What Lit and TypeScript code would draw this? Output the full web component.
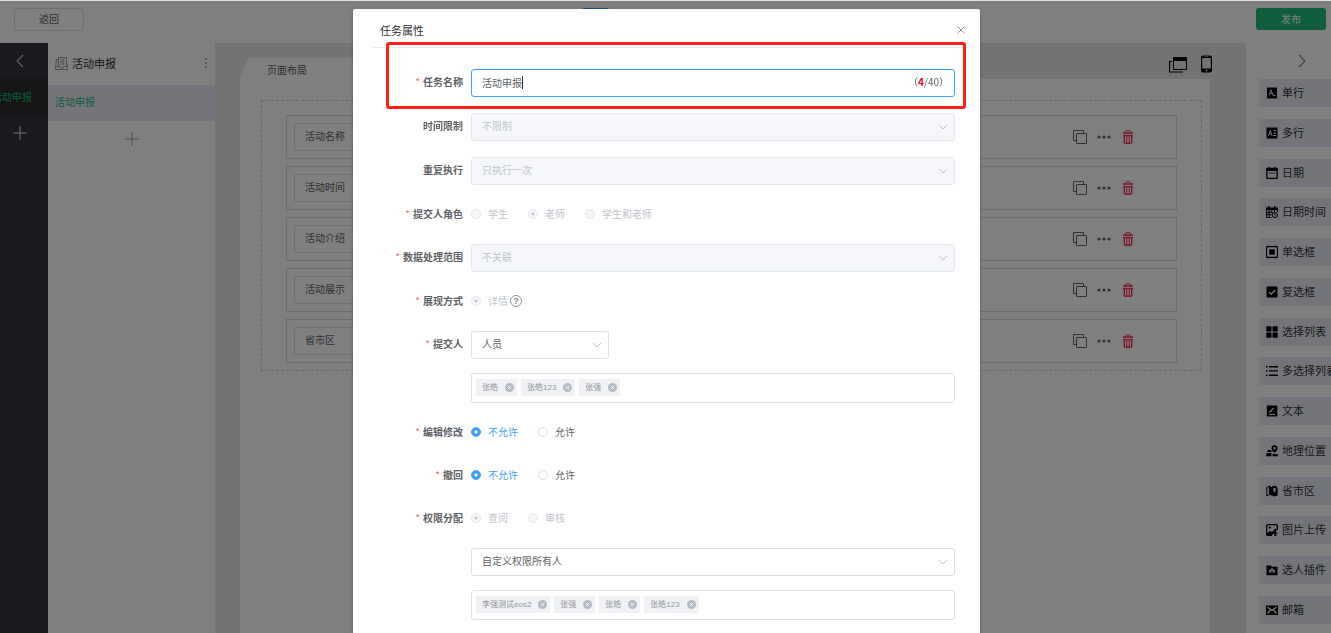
import { LitElement, html, css, svg, nothing, TemplateResult, SVGTemplateResult } from "lit";
import { customElement, state, query } from "lit/decorators.js";
import { classMap } from "lit/directives/class-map.js";
import { styleMap } from "lit/directives/style-map.js";

interface Tool {
  name: string;
  icon: SVGTemplateResult;
}

interface Choice {
  text: string;
  checked?: boolean;
}

const tools: Tool[] = [
  {
    name: "单行",
    icon: svg`<path fill-rule="evenodd" d="M1 .5h10v11H1zM4.600 2.500 2.500 8.500h1l.5-1.400h2l.5 1.400h1L5.400 2.500zM5 4l.7 2.200H4.300zM7.500 8h2v.9h-2z"/>`,
  },
  {
    name: "多行",
    icon: svg`<path fill-rule="evenodd" d="M.5.5h11v11H.5zM4 3 2 9h1l.4-1.400h1.900L5.700 9h1L4.800 3zM4.400 4.400 5 6.600H3.700zM7.500 3H10v.9H7.500zM7.500 5.500H10v.9H7.500zM7.500 8H10v.9H7.500z"/>`,
  },
  {
    name: "日期",
    icon: svg`<path fill-rule="evenodd" d="M1 .8h1.500V0H4v.8h4V0h1.500v.8H11q.8 0 .8.8V11q0 1-1 1H1.200q-1 0-1-1V1.600q0-.8.8-.8zM1.500 4v6.700h9V4zM3 5.500h1.300v1.200H3zM5.400 5.500h1.300v1.200H5.400zM7.800 5.500h1.300v1.200H7.800z"/>`,
  },
  {
    name: "日期时间",
    icon: svg`<path d="M0 1.500h2V0h1.500v1.500H8V0h1.500v1.500H12V4H0z"/><path d="M.5 4v7.500h5M11.500 4v2M.5 6.300h6M.5 8.700h5M3.200 4v7M5.800 4v3M8.500 4v2" fill="none" stroke="currentColor"/><circle cx="8.800" cy="9" r="2.600" fill="none" stroke="currentColor"/><path d="M8.800 7.400V9h1.500" fill="none" stroke="currentColor" stroke-width=".8"/>`,
  },
  {
    name: "单选框",
    icon: svg`<rect x=".6" y=".6" width="10.800" height="10.800" rx=".5" fill="none" stroke="currentColor" stroke-width="1.100"/><path d="M3.300 3.300h5.400v5.400H3.300z"/>`,
  },
  {
    name: "复选框",
    icon: svg`<rect x=".5" y=".5" width="11" height="11" rx="1"/><path class="cut" d="m3 6 2.200 2.200L9.200 4"/>`,
  },
  {
    name: "选择列表",
    icon: svg`<rect x=".3" y=".3" width="5.200" height="5.200" rx=".8"/><rect x="6.500" y=".3" width="5.200" height="5.200" rx=".8"/><rect x=".3" y="6.500" width="5.200" height="5.200" rx=".8"/><rect x="6.500" y="6.500" width="5.200" height="5.200" rx=".8"/>`,
  },
  {
    name: "多选择列表",
    icon: svg`<path d="M0 1h1.500v1.500H0zM0 5.200h1.500v1.500H0zM0 9.500h1.500V11H0zM3 1h9v1.400H3zM3 5.200h9v1.400H3zM3 9.500h9v1.400H3z"/>`,
  },
  {
    name: "文本",
    icon: svg`<rect x=".8" y=".5" width="10.500" height="11" rx=".8"/><path class="cut" d="m3.500 7.300 4.500-4.500M3 9.500h6"/>`,
  },
  {
    name: "地理位置",
    icon: svg`<path fill-rule="evenodd" d="M8.500.3a3 3 0 0 1 3 3C11.500 5.500 8.500 8 8.500 8s-3-2.500-3-4.700a3 3 0 0 1 3-3zm0 1.700a1.300 1.300 0 1 0 0 2.600 1.300 1.300 0 0 0 0-2.600z"/><path d="M1.800 5h3l1 2H1.200zM.8 8h4.600v3.300H0zM6.500 9h5l.5 2.300H6.500z"/>`,
  },
  {
    name: "省市区",
    icon: svg`<path d="M.8 2.500 3.500 1v8.500L.8 11z" fill="none" stroke="currentColor"/><path d="M3.500 1 6 2.200v8.500L3.500 9.500z"/><path fill-rule="evenodd" d="M8.500.8a3.200 3.200 0 0 1 3 3.200v6.500L8 11.500 5.500 10V4a3.200 3.200 0 0 1 3-3.200zm0 2a1.400 1.400 0 0 0-1.400 1.500c0 1.500 1.400 3.200 1.400 3.200s1.400-1.700 1.400-3.200a1.400 1.400 0 0 0-1.400-1.500z"/>`,
  },
  {
    name: "图片上传",
    icon: svg`<path d="M11.300 6V1.500q0-.8-.8-.8H1.500q-.8 0-.8.8v9q0 .8.8.8H6" fill="none" stroke="currentColor" stroke-width="1.300"/><circle cx="3.800" cy="3.600" r="1.100"/><path d="m1 9.500 3-2.800 2 1.300 3.500-3.500L11 6 6 11.300H1zM9.300 7 12 9.500h-1.700V12H8.400V9.500H6.800z"/>`,
  },
  {
    name: "选人插件",
    icon: svg`<path fill-rule="evenodd" d="M.5 1.500h4.300L6 2.700h5.500v8.500H.5zM6 4.200a1.200 1.200 0 0 0-1.200 1.300l-1.800.5v3h6V6l-1.800-.5A1.200 1.200 0 0 0 6 4.200z"/><path d="M5.500 6.500h1V9h-1zM3.800 7.500h.8V9h-.8zM7.400 7.500h.8V9h-.8z"/>`,
  },
  {
    name: "邮箱",
    icon: svg`<path d="M0 1.500h12v9.500H0z"/><path class="cut" d="m1.500 3.300 4.500 3 4.500-3M1.500 9.500 4.500 6M10.500 9.500 7.500 6"/>`,
  },
];

const fields = ["活动名称", "活动时间", "活动介绍", "活动展示", "省市区"];

const chevron = html`<svg class="chevron" viewBox="0 0 10 10" aria-hidden="true"><path d="m1 3 4 4 4-4" /></svg>`;
const plus = html`<svg class="plus" viewBox="0 0 14 14" aria-hidden="true"><path d="M0 7h14M7 0v14" /></svg>`;

@customElement("app-root")
export class AppRoot extends LitElement {
  static styles = css`
    :host {
      display: block;
      height: 100vh;
      overflow: hidden;
      position: relative;
      font: 10px/16px "Noto Sans CJK SC", "Noto Sans", sans-serif;
      color: #606266;
      --line: #dcdfe6;
      --tint: #e7eaf4;
      --green: #1fba78;
      --blue: #409eff;
    }
    *,
    *::before {
      box-sizing: border-box;
    }
    button,
    input,
    select {
      font: inherit;
      color: inherit;
      margin: 0;
    }
    button {
      border: 0;
      padding: 0;
      background: none;
    }
    svg {
      display: block;
      flex: none;
    }
    .app {
      height: 100%;
      display: flex;
      flex-direction: column;
      background: #fff;
    }
    .bar {
      display: flex;
      justify-content: space-between;
      align-items: flex-start;
      height: 43px;
      padding: 7px 5px 0 14px;
      border-top: 1px solid #fff;
    }
    .bar button {
      width: 70px;
      height: 22px;
      padding-bottom: 1px;
      border-radius: 3px;
    }
    .bar .back {
      height: 23px;
      border: 1px solid var(--line);
    }
    .bar .publish {
      background: var(--green);
      color: #fff;
    }
    .bar .mode {
      width: 27px;
      margin-right: 150px;
      background: var(--blue);
      border-radius: 2px;
    }
    .work {
      flex: 1;
      min-height: 0;
      display: flex;
    }
    .rail {
      width: 48px;
      background: #34333c;
      color: #c4c4c4;
      display: flex;
      flex-direction: column;
      overflow: hidden;
    }
    .rail button,
    .steps button {
      height: 36px;
      display: grid;
      place-items: center;
    }
    .rail button {
      padding-right: 8px;
    }
    .rail .add {
      color: #e8e8e8;
    }
    .rail .active {
      background: #2b2b2d;
      color: var(--green);
      justify-content: start;
    }
    .rail .active span {
      margin-left: -8px;
      white-space: nowrap;
    }
    .plus {
      width: 14px;
      height: 14px;
      stroke: currentColor;
      fill: none;
    }
    .steps {
      width: 167px;
      display: flex;
      flex-direction: column;
      color: #9a9a9e;
    }
    .steps header {
      height: 42px;
      padding: 0 7px 2px;
      display: flex;
      align-items: center;
      gap: 4px;
    }
    .steps h2 {
      flex: 1;
      margin: 0;
      font-size: 11px;
      font-weight: 400;
      color: #303133;
    }
    .steps .active {
      background: var(--tint);
      color: var(--green);
      justify-content: start;
      padding: 0 0 2px 7px;
    }
    .canvas {
      flex: 1;
      min-width: 0;
      background: #e6e6e6;
      padding: 15px 36px 0 25px;
      display: flex;
      flex-direction: column;
    }
    .tabs {
      height: 21px;
      display: flex;
      justify-content: space-between;
      align-items: center;
    }
    .tab {
      width: 160px;
      height: 21px;
      padding: 4px 27px 0;
      background: #fff;
      clip-path: polygon(8px 0, 100% 0, 100% 100%, 0 100%);
    }
    .devices {
      height: 31px;
      padding-bottom: 10px;
      display: flex;
      align-items: center;
      gap: 14px;
      color: #000;
    }
    .devices svg {
      width: 18px;
      height: 18px;
    }
    .devices .phone {
      width: 11px;
      margin-right: -2px;
    }
    .sheet {
      flex: 1;
      background: #fff;
      padding: 21px 8px 0 21px;
    }
    .drop {
      border: 1px dashed #d2d2d4;
      padding: 14px 24px 7px;
      display: grid;
      gap: 7px;
    }
    .card {
      height: 44px;
      border: 1px solid #d9d9db;
      padding: 0 41px 0 7px;
      display: flex;
      align-items: center;
      gap: 10px;
    }
    .card .name {
      width: 60%;
      height: 28px;
      margin-right: auto;
      border: 1px solid var(--line);
      border-radius: 2px;
      padding: 4px 10px;
    }
    .card svg {
      width: 14px;
      height: 14px;
    }
    .card .trash {
      color: #f5365c;
    }
    .tools {
      width: 85px;
      display: flex;
      flex-direction: column;
      padding: 0 0 9px 13px;
      overflow: hidden;
      color: #303133;
      font-size: 11px;
    }
    .fold {
      height: 36px;
      padding-left: 14px;
      display: grid;
      place-items: center;
      color: #808080;
    }
    .angle {
      width: 8px;
      height: 14px;
      stroke: currentColor;
      fill: none;
      stroke-width: 1.200;
    }
    .palette {
      flex: 1;
      display: flex;
      flex-direction: column;
      justify-content: space-between;
    }
    .palette button {
      height: 28px;
      width: 90px;
      padding-left: 7px;
      display: flex;
      align-items: center;
      gap: 4px;
      background: var(--tint);
      white-space: nowrap;
    }
    .palette svg {
      width: 12px;
      height: 12px;
      color: #000;
      fill: currentColor;
    }
    .palette span {
      padding-bottom: 2px;
    }
    .cut {
      fill: none;
      stroke: #fff;
      stroke-width: 1.200;
    }
    .mask {
      position: absolute;
      inset: 1px 0 0;
      background: rgba(0, 0, 0, 0.5);
      display: flex;
      justify-content: center;
      align-items: flex-start;
      padding: 8px 0 0 2px;
    }
    .top-edge {
      position: absolute;
      inset: 0 0 auto;
      height: 1px;
      background: #dfe1e0;
    }
    .dialog {
      width: 627px;
      max-width: 96%;
      background: #fff;
      border-radius: 2px;
      box-shadow: 0 1px 3px rgba(0, 0, 0, 0.3);
      padding-bottom: 40px;
    }
    .dialog > header {
      height: 39px;
      margin: 0 11px 0 20px;
      padding: 4px 3px 0 7px;
      display: flex;
      align-items: center;
      justify-content: space-between;
      border-bottom: 1px solid #e8e8ea;
    }
    .dialog h1 {
      margin: 0;
      font-size: 11px;
      font-weight: 400;
      color: #303133;
    }
    .close svg {
      width: 10px;
      height: 10px;
      stroke: #909399;
      fill: none;
    }
    form {
      padding: 21px 25px 0 0;
      display: grid;
      gap: 16px;
    }
    .row {
      position: relative;
      display: grid;
      grid-template-columns: 110px 1fr;
      column-gap: 8px;
    }
    .title {
      text-align: right;
      font-weight: 700;
      line-height: 25px;
    }
    .required::before {
      content: "*";
      color: #f56c6c;
      font-weight: 400;
      margin-right: 3px;
    }
    .stack {
      display: grid;
      gap: 14px;
    }
    .box {
      position: relative;
      height: 28px;
    }
    .short {
      width: 138px;
    }
    .box input,
    .box select {
      width: 100%;
      height: 100%;
      border: 1px solid var(--line);
      border-radius: 3px;
      padding: 0 10px 2px;
      background: #fff;
      outline: none;
      appearance: none;
    }
    .box input {
      border-color: var(--blue);
      caret-color: transparent;
    }
    .box select:disabled {
      background: #f5f7fa;
      border-color: #e4e7ed;
      color: #c0c4cc;
      opacity: 1;
    }
    .box .chevron {
      position: absolute;
      right: 7px;
      top: 9px;
      width: 10px;
      height: 10px;
      stroke: #c0c4cc;
      fill: none;
      pointer-events: none;
    }
    .caret {
      position: absolute;
      top: 7px;
      width: 1px;
      height: 13px;
      background: #303133;
      pointer-events: none;
    }
    .count {
      position: absolute;
      right: 6px;
      top: 5px;
      pointer-events: none;
    }
    .count b {
      color: #f00018;
    }
    .mark {
      position: absolute;
      inset: -27px -11px -12px 33px;
      border: 3px solid #ff2015;
      border-radius: 3px;
      pointer-events: none;
    }
    .radios {
      height: 27px;
      padding-bottom: 2px;
      display: flex;
      align-items: center;
      gap: 20px;
    }
    .radios label {
      display: flex;
      align-items: center;
      gap: 7px;
    }
    .radios input {
      appearance: none;
      width: 10px;
      height: 10px;
      border: 1px solid var(--line);
      border-radius: 50%;
      background: #fff;
    }
    .radios input:checked {
      border-color: var(--blue);
      background: radial-gradient(circle, #fff 1px, var(--blue) 2px);
    }
    .on {
      color: var(--blue);
    }
    .off {
      color: #c0c4cc;
    }
    .off input {
      border-color: #e4e7ed;
      background: #f5f7fa;
    }
    .off input:checked {
      border-color: #e4e7ed;
      background: radial-gradient(circle, #c0c4cc 1px, #f5f7fa 2px);
    }
    .help {
      width: 12px;
      height: 12px;
      margin-left: -18px;
      border: 1px solid #909399;
      border-radius: 50%;
      color: #808080;
      font: 700 9px/10px "Liberation Sans", sans-serif;
      text-align: center;
    }
    .tags {
      height: 30px;
      border: 1px solid var(--line);
      border-radius: 3px;
      padding: 0 4px 2px;
      display: flex;
      align-items: center;
      gap: 4px;
      overflow: hidden;
    }
    .tag {
      height: 17px;
      padding: 0 3px 0 6px;
      display: flex;
      align-items: center;
      gap: 7px;
      background: #f0f2f5;
      color: #909399;
      font: 8px/17px "Liberation Sans", "Noto Sans CJK SC", sans-serif;
    }
    .tag svg {
      width: 9px;
      height: 9px;
    }
  `;

  @state() private taskName = "活动申报";
  @query("#task") private taskInput!: HTMLInputElement;

  protected firstUpdated() {
    this.taskInput.focus();
    this.taskInput.setSelectionRange(this.taskName.length, this.taskName.length);
  }

  private radios(id: string, title: string, choices: Choice[], disabled = false, extra: unknown = nothing) {
    return html`<div class="row">
      <span class="title required" id=${id}>${title}</span>
      <div class="radios" role="radiogroup" aria-labelledby=${id}>
        ${choices.map(
          (c) => html`<label class=${classMap({ on: !!c.checked && !disabled, off: disabled })}
            ><input type="radio" name=${id} ?checked=${c.checked} ?disabled=${disabled} />${c.text}</label
          >`
        )}
        ${extra}
      </div>
    </div>`;
  }

  private select(id: string, value: string, disabled = false, short = false, label: unknown = nothing) {
    return html`<div class=${classMap({ box: true, short })}>
      <select id=${id} ?disabled=${disabled} aria-label=${label}>
        <option>${value}</option>
      </select>
      ${chevron}
    </div>`;
  }

  private selectRow(id: string, title: string, value: string, required = false) {
    return html`<div class="row">
      <label class=${classMap({ title: true, required })} for=${id}>${title}</label>
      ${this.select(id, value, true)}
    </div>`;
  }

  private tags(names: string[]): TemplateResult {
    return html`<div class="tags">
      ${names.map(
        (n) => html`<span class="tag"
          >${n}<button type="button" aria-label="移除">
            <svg viewBox="0 0 10 10">
              <circle cx="5" cy="5" r="5" fill="#b4bac4" />
              <path d="m3.200 3.200 3.600 3.600M6.800 3.200 3.200 6.800" stroke="#fff" />
            </svg></button
        ></span>`
      )}
    </div>`;
  }

  private renderDialog() {
    return html`<section class="dialog" role="dialog" aria-labelledby="heading">
      <header>
        <h1 id="heading">任务属性</h1>
        <button class="close" aria-label="关闭">
          <svg viewBox="0 0 10 10"><path d="m1.500 1.500 7 7M8.500 1.500l-7 7" /></svg>
        </button>
      </header>
      <form>
        <div class="row">
          <label class="title required" for="task">任务名称</label>
          <div class="box">
            <input
              id="task"
              type="text"
              maxlength="40"
              .value=${this.taskName}
              @input=${(e: Event) => (this.taskName = (e.target as HTMLInputElement).value)}
            />
            <span class="caret" style=${styleMap({ left: `${11 + this.taskName.length * 10}px` })}></span>
            <span class="count">（<b>${this.taskName.length}</b>/40）</span>
          </div>
          <div class="mark"></div>
        </div>
        ${this.selectRow("limit", "时间限制", "不限制")} ${this.selectRow("repeat", "重复执行", "只执行一次")}
        ${this.radios("role", "提交人角色", [{ text: "学生" }, { text: "老师", checked: true }, { text: "学生和老师" }], true)}
        ${this.selectRow("scope", "数据处理范围", "不关联", true)}
        ${this.radios("display", "展现方式", [{ text: "详情", checked: true }], true, html`<span class="help">?</span>`)}
        <div class="row">
          <label class="title required" for="submitter">提交人</label>
          <div class="stack">
            ${this.select("submitter", "人员", false, true)} ${this.tags(["张皓", "张皓123", "张强"])}
          </div>
        </div>
        ${this.radios("edit", "编辑修改", [{ text: "不允许", checked: true }, { text: "允许" }])}
        ${this.radios("recall", "撤回", [{ text: "不允许", checked: true }, { text: "允许" }])}
        ${this.radios("rights", "权限分配", [{ text: "查阅", checked: true }, { text: "审核" }], true)}
        <div class="row">
          <span></span>
          <div class="stack">
            ${this.select("owner", "自定义权限所有人", false, false, "权限分配")}
            ${this.tags(["李强测试eos2", "张强", "张皓", "张皓123"])}
          </div>
        </div>
      </form>
    </section>`;
  }

  render() {
    return html`
      <div class="app">
        <header class="bar">
          <button class="back">返回</button>
          <button class="mode" aria-label="模式"></button>
          <button class="publish">发布</button>
        </header>
        <div class="work">
          <nav class="rail">
            <button aria-label="收起"><svg class="angle" viewBox="0 0 8 14"><path d="M7 1 1 7l6 6" /></svg></button>
            <button class="active"><span>活动申报</span></button>
            <button class="add" aria-label="添加">${plus}</button>
          </nav>
          <aside class="steps">
            <header>
              <svg width="13" height="13" viewBox="0 0 13 13" fill="none" stroke="currentColor">
                <path d="M3.500 9.500v-9h8v9M5.500 3h4M5.500 5h4M5.500 7h4M3.500 2.500h-2l-1 7v3h12v-3h-4l-.5 1.500H5l-.5-1.500h-4M11.500 5l1 4.500" />
              </svg>
              <h2>活动申报</h2>
              <svg width="4" height="12" viewBox="0 0 4 12" fill="currentColor">
                <circle cx="2" cy="2" r="1" /><circle cx="2" cy="6" r="1" /><circle cx="2" cy="10" r="1" />
              </svg>
            </header>
            <button class="active">活动申报</button>
            <button aria-label="添加">${plus}</button>
          </aside>
          <main class="canvas">
            <div class="tabs">
              <div class="tab">页面布局</div>
              <div class="devices">
                <svg viewBox="0 0 18 18">
                  <path
                    fill-rule="evenodd"
                    fill="currentColor"
                    d="M5 2h12q1 0 1 1v11q0 1-1 1H5q-1 0-1-1V3q0-1 1-1zm0 4v8h12V6z"
                  />
                  <path d="M3 6.500H.5v10.500H14" fill="none" stroke="currentColor" stroke-width="1.200" />
                </svg>
                <svg class="phone" viewBox="0 0 11 18">
                  <path
                    fill-rule="evenodd"
                    fill="currentColor"
                    d="M2 .5h7q2 0 2 2v13q0 2-2 2H2q-2 0-2-2v-13q0-2 2-2zM1.200 3v10.500h8.600V3zM3.500 1.500v.6h4v-.6zM5.500 14.500a1 1 0 1 0 0 2 1 1 0 0 0 0-2z"
                  />
                </svg>
              </div>
            </div>
            <div class="sheet">
              <div class="drop">
                ${fields.map(
                  (f) => html`<div class="card">
                    <div class="name">${f}</div>
                    <button aria-label="复制">
                      <svg viewBox="0 0 14 14" fill="none" stroke="currentColor">
                        <rect x="3.500" y="3.500" width="10" height="10" rx=".5" />
                        <path d="M3.500 10.500h-3V.5h10v3" />
                      </svg>
                    </button>
                    <button aria-label="更多">
                      <svg viewBox="0 0 14 14" fill="currentColor">
                        <circle cx="2" cy="7" r="1.600" /><circle cx="7" cy="7" r="1.600" /><circle cx="12" cy="7" r="1.600" />
                      </svg>
                    </button>
                    <button class="trash" aria-label="删除">
                      <svg viewBox="0 0 14 14" fill="none" stroke="currentColor">
                        <path d="M4.500 2.500q0-1.800 1.500-1.800h2q1.500 0 1.500 1.800" />
                        <path d="M2 3h10" stroke-width="1.600" />
                        <path d="M2 5.600h10" stroke-width="1.400" />
                        <path d="M3.300 5.500v6.700q0 1 1 1h5.400q1 0 1-1V5.500" stroke-width="1.400" />
                        <path d="M5.700 6v7M8.300 6v7" stroke-width="1.100" />
                      </svg>
                    </button>
                  </div>`
                )}
              </div>
            </div>
          </main>
          <aside class="tools">
            <button class="fold" aria-label="展开"><svg class="angle" viewBox="0 0 8 14"><path d="m1 1 6 6-6 6" /></svg></button>
            <div class="palette">
              ${tools.map((t) => html`<button><svg viewBox="0 0 12 12">${t.icon}</svg><span>${t.name}</span></button>`)}
            </div>
          </aside>
        </div>
      </div>
      <div class="mask">${this.renderDialog()}</div>
      <div class="top-edge"></div>
    `;
  }
}
